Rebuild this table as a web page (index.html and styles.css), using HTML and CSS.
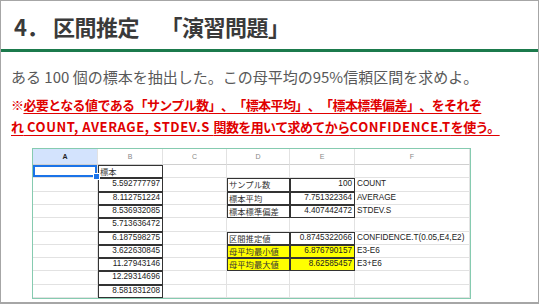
FILE: index.html
```html
<!DOCTYPE html>
<html lang="ja">
<head>
<meta charset="utf-8">
<link rel="stylesheet" href="styles.css">
</head>
<body>
<div class="slide">
  <header class="title-bar">
    <h1 class="title"><span class="num">4．</span>区間推定　「演習問題」</h1>
  </header>
  <p class="lead">ある 100 個の標本を抽出した。この母平均の95%信頼区間を求めよ。</p>
  <p class="note">※<span class="ul">必要となる値である「サンプル数」、「標本平均」、「標本標準偏差」、をそれぞ<br>れ<span class="lat"> COUNT, AVERAGE, STDEV.S </span>関数を用いて求めてから<span class="lat">CONFIDENCE.T</span>を使う。</span></p>
  <div class="sheet">
    <div class="hd sel">A</div><div class="hd">B</div><div class="hd">C</div><div class="hd">D</div><div class="hd">E</div><div class="hd">F</div>

    <div class="c active"><span class="handle"></span></div><div class="c bx jp">標本</div><div class="c"></div><div class="c"></div><div class="c"></div><div class="c"></div>
    <div class="c"></div><div class="c bx r">5.592777797</div><div class="c"></div><div class="c bx jp">サンプル数</div><div class="c bx r">100</div><div class="c">COUNT</div>
    <div class="c"></div><div class="c bx r">8.112751224</div><div class="c"></div><div class="c bx jp">標本平均</div><div class="c bx r">7.751322364</div><div class="c">AVERAGE</div>
    <div class="c"></div><div class="c bx r">8.536932085</div><div class="c"></div><div class="c bx jp">標本標準偏差</div><div class="c bx r">4.407442472</div><div class="c">STDEV.S</div>
    <div class="c"></div><div class="c bx r">5.713636472</div><div class="c"></div><div class="c"></div><div class="c"></div><div class="c"></div>
    <div class="c"></div><div class="c bx r">6.187598275</div><div class="c"></div><div class="c bx jp">区間推定値</div><div class="c bx r">0.8745322066</div><div class="c">CONFIDENCE.T(0.05,E4,E2)</div>
    <div class="c"></div><div class="c bx r">3.622630845</div><div class="c"></div><div class="c bx jp yl">母平均最小値</div><div class="c bx r yl">6.876790157</div><div class="c">E3-E6</div>
    <div class="c"></div><div class="c bx r">11.27943146</div><div class="c"></div><div class="c bx jp yl">母平均最大値</div><div class="c bx r yl">8.62585457</div><div class="c">E3+E6</div>
    <div class="c"></div><div class="c bx r">12.29314696</div><div class="c"></div><div class="c"></div><div class="c"></div><div class="c"></div>
    <div class="c"></div><div class="c bx r">8.581831208</div><div class="c"></div><div class="c"></div><div class="c"></div><div class="c"></div>
  </div>
</div>
</body>
</html>
```

FILE: styles.css
```css
* { box-sizing: border-box; }
html, body { margin: 0; padding: 0; background: #fff; }
body {
  font-family: "Noto Sans CJK JP", "Noto Sans", sans-serif;
  text-spacing-trim: space-all;
}

.slide {
  width: 539px;
  height: 304px;
  border: 1px solid #a6a6a6;
  border-bottom-width: 2px;
  overflow: hidden;
  background: #fff;
}

.title-bar {
  height: 51px;
  border-bottom: 3px solid #1b7a4c;
  display: flex;
  align-items: center;
  padding-left: 13px;
}
.title {
  margin: 0;
  font-size: 22px;
  font-weight: 700;
  color: #3a3a3a;
  line-height: 26px;
  padding-top: 2px;
  letter-spacing: -0.5px;
}
.title .num { margin-right: 5px; }

.lead {
  margin: 15px 0 0 10px;
  font-size: 15px;
  line-height: 20px;
  color: #595959;
  white-space: nowrap;
}

.note {
  margin: 7px 0 0 10px;
  font-size: 13px;
  line-height: 22px;
  font-weight: 700;
  color: #e00000;
  white-space: nowrap;
  letter-spacing: -0.6px;
}
.note .lat { letter-spacing: 0.6px; }
.note .ul {
  text-decoration: underline;
  text-decoration-thickness: 1px;
  text-underline-offset: 3px;
}

.sheet {
  margin: 10px 0 0 31px;
  width: 439px;
  height: 151px;
  border: 1px solid #86cbb0;
  display: grid;
  grid-template-columns: 65px 65px 64px 63px 65px 115px;
  grid-template-rows: 16px repeat(10, 1fr);
  font-family: "Liberation Sans", Arial, sans-serif;
  font-size: 8.2px;
  color: #222;
}
.hd {
  display: flex;
  align-items: center;
  justify-content: center;
  font-size: 7px;
  color: #888;
  border-right: 1px solid #e2e2e2;
  border-bottom: 1px solid #d0d0d0;
  background: #fff;
}
.hd.sel {
  background: #d3e3fd;
  color: #1f1f1f;
  font-weight: 700;
}
.c {
  display: flex;
  align-items: center;
  padding: 0 2px;
  border-right: 1px solid #e2e2e2;
  border-bottom: 1px solid #e2e2e2;
  white-space: nowrap;
  line-height: 1;
}
.c.r { justify-content: flex-end; }
.c.jp { font-family: "Noto Sans CJK JP", sans-serif; font-size: 8.3px; color: #333; }
.c.bx {
  border-right-color: #333;
  border-bottom-color: #333;
  box-shadow: inset 1px 1px 0 #333;
}
.c.yl { background: #ffff00; }
.c.active {
  position: relative;
  box-shadow: inset 0 0 0 2px #1a73e8;
}
.handle {
  position: absolute;
  right: -3px;
  bottom: -3px;
  width: 5px;
  height: 5px;
  background: #1a73e8;
  border: 1px solid #fff;
  box-sizing: content-box;
  z-index: 2;
}
```
